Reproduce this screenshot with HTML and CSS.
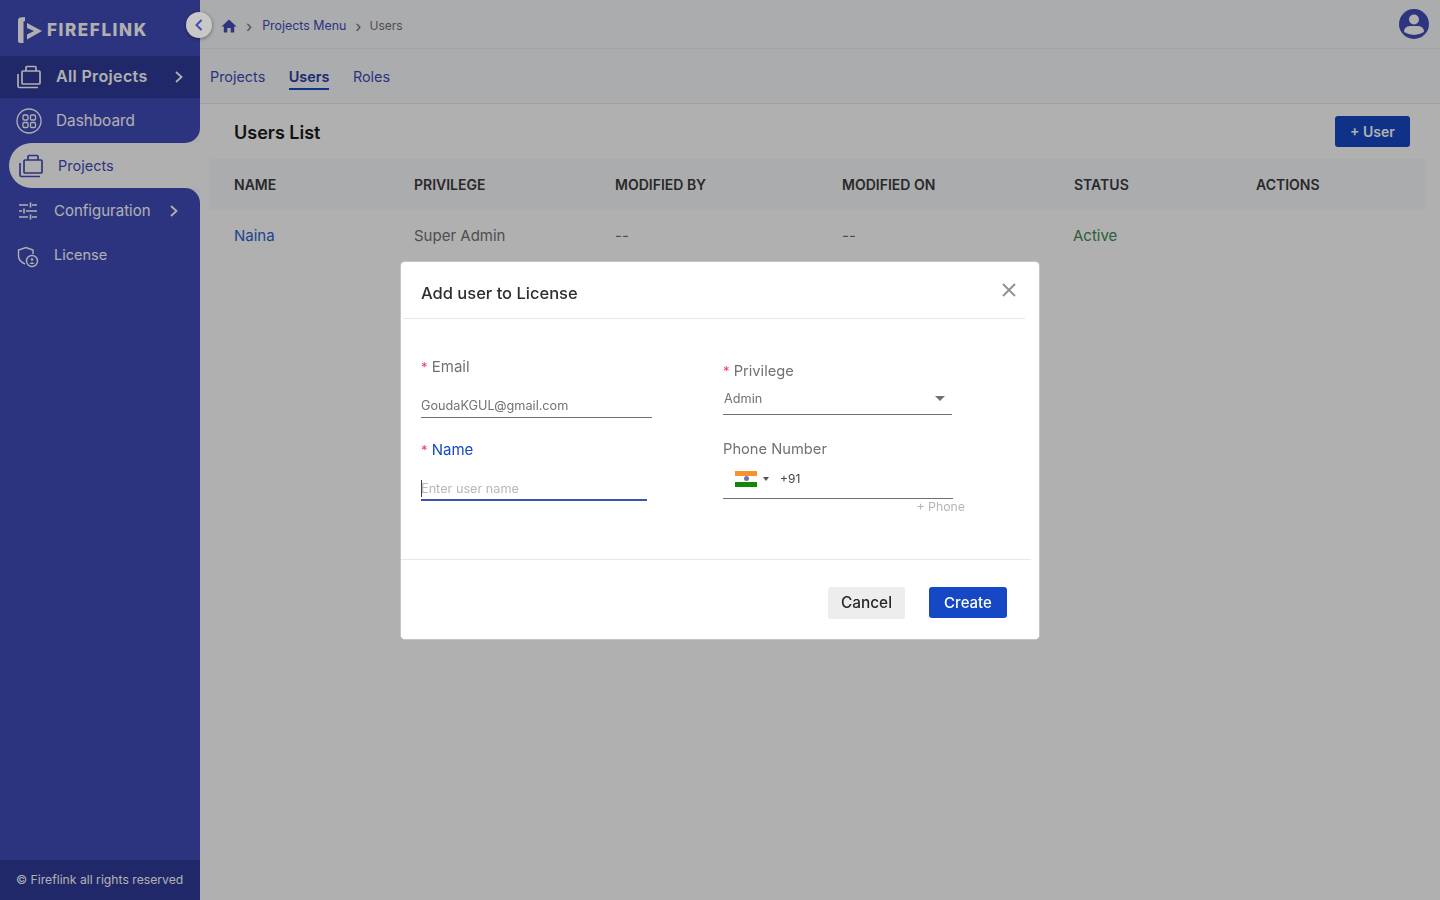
FILE: index.html
```html
<!DOCTYPE html>
<html lang="en">
<head>
    <meta charset="utf-8">
    <title>Users</title>
    <link rel="stylesheet" href="styles.css">
</head>
<body>
    <div class="app">
        <!-- Sidebar -->
        <aside class="sidebar">
            <div class="logo">
                <svg class="logo-mark" width="26" height="28" viewBox="0 0 26 28">
                    <path d="M1 4 Q1 2 3 1.500 L8 1 V5 L6.500 5.500 V27 H3 Q1 27 1 25 Z" fill="#fff"/>
                    <path d="M10 7 L25 15 L10 23.500 V18.500 L17 15 L10 12 Z" fill="#fff"/>
                </svg>
                <span class="logo-text">FIREFLINK</span>
            </div>
            <nav class="menu">
                <a class="menu-item menu-all">
                    <svg class="menu-icon" width="26" height="26" viewBox="0 0 26 26" fill="none" stroke="currentColor" stroke-width="1.700">
                        <rect x="6" y="7" width="18" height="13" rx="1"/>
                        <path d="M10 7 V3.500 Q10 2.500 11 2.500 H19 Q20 2.500 20 3.500 V7"/>
                        <path d="M2 10 V22 Q2 23.500 3.500 23.500 H22"/>
                    </svg>
                    <span class="menu-label">All Projects</span>
                    <svg class="chevron" width="10" height="12" viewBox="0 0 10 12" fill="none" stroke="currentColor" stroke-width="1.800"><path d="M2 1 L7.500 6 L2 11"/></svg>
                </a>
                <a class="menu-item menu-before">
                    <svg class="menu-icon" width="26" height="26" viewBox="0 0 26 26" fill="none" stroke="currentColor" stroke-width="1.300">
                        <circle cx="13" cy="13" r="12"/>
                        <rect x="7" y="7" width="5" height="5" rx="1.200"/>
                        <rect x="14.500" y="7" width="5" height="5" rx="1.200"/>
                        <rect x="7" y="14.500" width="5" height="5" rx="1.200"/>
                        <rect x="14.500" y="14.500" width="5" height="5" rx="1.200"/>
                    </svg>
                    <span class="menu-label">Dashboard</span>
                </a>
                <div class="active-wrap">
                    <a class="menu-item menu-active">
                        <svg class="menu-icon" width="26" height="26" viewBox="0 0 26 26" fill="none" stroke="currentColor" stroke-width="1.700">
                            <rect x="6" y="7" width="18" height="13" rx="1"/>
                            <path d="M10 7 V3.500 Q10 2.500 11 2.500 H19 Q20 2.500 20 3.500 V7"/>
                            <path d="M2 10 V22 Q2 23.500 3.500 23.500 H22"/>
                        </svg>
                        <span class="menu-label">Projects</span>
                    </a>
                </div>
                <a class="menu-item menu-after">
                    <svg class="menu-icon" width="20" height="18" viewBox="0 0 20 18" fill="none" stroke="currentColor" stroke-width="1.600">
                        <path d="M1 3 H10 M14 3 H19 M12.500 0.500 V5.500 M1 9 H4 M8 9 H19 M6 6.500 V11.500 M1 15 H10 M14 15 H19 M12.500 12.500 V17.500"/>
                    </svg>
                    <span class="menu-label">Configuration</span>
                    <svg class="chevron" width="10" height="12" viewBox="0 0 10 12" fill="none" stroke="currentColor" stroke-width="1.800"><path d="M2 1 L7.500 6 L2 11"/></svg>
                </a>
                <a class="menu-item menu-license">
                    <svg class="menu-icon" width="22" height="22" viewBox="0 0 22 22" fill="none" stroke="currentColor" stroke-width="1.400">
                        <path d="M16 8 V4 L9 1.500 L1.500 4 V10 Q1.500 15 8 18"/>
                        <circle cx="15" cy="15" r="5.500"/>
                        <circle cx="15" cy="13.500" r="1.300" fill="currentColor" stroke="none"/>
                        <path d="M12.500 18 Q15 14.500 17.500 18 Z" fill="currentColor" stroke="none"/>
                    </svg>
                    <span class="menu-label">License</span>
                </a>
            </nav>
            <div class="sidebar-footer">© Fireflink all rights reserved</div>
        </aside>

        <!-- Main content -->
        <main class="main">
            <header class="topbar">
                <div class="crumbs">
                    <svg width="16" height="14" viewBox="0 0 16 14"><path d="M8 0.500 L15.500 7.500 H13.200 V13.500 H9.700 V9 H6.300 V13.500 H2.800 V7.500 H0.500 Z" fill="#434db8"/></svg>
                    <span class="crumb-sep">›</span>
                    <span class="crumb-link">Projects Menu</span>
                    <span class="crumb-sep">›</span>
                    <span class="crumb-now">Users</span>
                </div>
                <svg class="avatar" width="30" height="30" viewBox="0 0 30 30">
                    <circle cx="15" cy="15" r="15" fill="#434db8"/>
                    <circle cx="15" cy="10.500" r="5" fill="#fff"/>
                    <path d="M5 23 Q5 17.500 11 17 H19 Q25 17.500 25 23 Q20 26 15 26 Q10 26 5 23 Z" fill="#fff"/>
                </svg>
            </header>

            <div class="tabs">
                <a class="tab">Projects</a>
                <a class="tab tab-active">Users</a>
                <a class="tab">Roles</a>
            </div>

            <section class="card">
                <div class="card-head">
                    <h2>Users List</h2>
                    <button class="add-btn">+ User</button>
                </div>
                <div class="table-row table-head">
                    <span>NAME</span>
                    <span>PRIVILEGE</span>
                    <span>MODIFIED BY</span>
                    <span>MODIFIED ON</span>
                    <span>STATUS</span>
                    <span>ACTIONS</span>
                </div>
                <div class="table-row">
                    <span class="user-name">Naina</span>
                    <span>Super Admin</span>
                    <span>--</span>
                    <span>--</span>
                    <span class="status">Active</span>
                    <span></span>
                </div>
            </section>
        </main>
    </div>

    <div class="overlay"></div>

    <button class="collapse">
        <svg width="8" height="12" viewBox="0 0 8 12" fill="none" stroke="#434db8" stroke-width="2"><path d="M6.500 1 L1.500 6 L6.500 11"/></svg>
    </button>

    <!-- Add user dialog -->
    <div class="modal">
        <div class="modal-head">
            <h3>Add user to License</h3>
            <svg class="modal-close" width="14" height="14" viewBox="0 0 14 14" stroke="#8a8f9a" stroke-width="1.800"><path d="M1 1 L13 13 M13 1 L1 13"/></svg>
        </div>
        <div class="modal-body">
            <div class="col">
                <div class="field field-email">
                    <label><i>*</i> Email</label>
                    <div class="value">GoudaKGUL@gmail.com</div>
                </div>
                <div class="field field-name">
                    <label class="focus"><i>*</i> Name</label>
                    <div class="value placeholder"><b class="caret"></b>Enter user name</div>
                </div>
            </div>
            <div class="col col-right">
                <div class="field field-privilege">
                    <label><i>*</i> Privilege</label>
                    <div class="value select">Admin<b class="arrow"></b></div>
                </div>
                <div class="field field-phone">
                    <label>Phone Number</label>
                    <div class="value phone">
                        <span class="flag"><b class="saffron"></b><b class="white"><em></em></b><b class="green"></b></span>
                        <b class="arrow arrow-small"></b>
                        <span class="dial">+91</span>
                    </div>
                    <div class="hint">+ Phone</div>
                </div>
            </div>
        </div>
        <div class="modal-foot">
            <button class="btn-cancel">Cancel</button>
            <button class="btn-create">Create</button>
        </div>
    </div>
</body>
</html>
```
FILE: styles.css
```css
* {
    margin: 0;
    padding: 0;
    box-sizing: border-box;
    font-family: 'Inter', 'Open Sans', sans-serif;
}

:root {
    --brand: #424cb9;
    --brand-dark: #2f3a99;
    --blue: #1648c6;
    --page: #ffffff;
}

body {
    width: 1440px;
    height: 900px;
    overflow: hidden;
    background: var(--page);
}

.app {
    display: flex;
    height: 900px;
}

/* Sidebar */
.sidebar {
    width: 200px;
    flex-shrink: 0;
    display: flex;
    flex-direction: column;
    background: var(--brand);
    color: #fff;
}

.logo {
    height: 56px;
    display: flex;
    align-items: center;
    padding: 3px 0 0 17px;
    gap: 4px;
}

.logo-text {
    font-size: 17px;
    font-weight: 800;
    letter-spacing: 1.6px;
}

.menu {
    flex: 1;
    background: #f8f9fc;
    display: flex;
    flex-direction: column;
}

.menu-item {
    display: flex;
    align-items: center;
    height: 45px;
    font-size: 15px;
    background: var(--brand);
}

.menu-all {
    height: 42px;
    background: var(--brand-dark);
    padding-left: 16px;
    font-size: 16px;
    font-weight: 600;
    letter-spacing: 0.35px;
}

.menu-all .menu-label { margin: 0 0 2px 14px; }
.menu-all .chevron { margin-left: 26px; }

.menu-before {
    padding-left: 16px;
    border-bottom-right-radius: 15px;
    font-size: 15.3px;
}

.menu-before .menu-label { margin-left: 14px; }

.active-wrap {
    height: 45px;
    padding-left: 9px;
    background: var(--brand);
}

.menu-active {
    padding-left: 9px;
    background: var(--page);
    color: var(--brand);
    border-radius: 24px 0 0 24px;
    font-size: 14.5px;
}

.menu-active .menu-label { margin-left: 14px; }

.menu-after {
    padding-left: 18px;
    border-top-right-radius: 15px;
}

.menu-after .menu-label { margin-left: 16px; }
.menu-after .chevron { margin-left: 18px; }

.menu-license {
    padding: 13px 0 0 17px;
    flex: 1;
    align-items: flex-start;
    font-size: 14.5px;
}

.menu-license .menu-label { margin-left: 15px; }

.sidebar-footer {
    height: 40px;
    display: flex;
    align-items: center;
    padding: 0 0 1px 16px;
    background: var(--brand-dark);
    font-size: 12.2px;
}

/* Main column */
.main {
    flex: 1;
    display: flex;
    flex-direction: column;
    min-width: 0;
}

.topbar {
    height: 49px;
    display: flex;
    align-items: center;
    justify-content: space-between;
    padding: 0 11px 0 21px;
    background: #f8f9fc;
    border-bottom: 1px solid #eceef2;
}

.crumbs {
    display: flex;
    align-items: center;
    font-size: 12.4px;
    padding-top: 3px;
}

.crumb-sep {
    margin: 0 9px;
    color: #727272;
    font-size: 16px;
    line-height: 16px;
}

.crumb-link {
    color: var(--brand);
    margin-left: 1px;
}

.crumb-now {
    color: #727272;
    font-size: 12px;
    margin-left: -1px;
}

.tabs {
    height: 55px;
    display: flex;
    align-items: center;
    gap: 23.5px;
    padding-left: 10px;
    background: #f8f9fc;
    border-bottom: 1px solid #e8e8ec;
}

.tab {
    font-size: 14.4px;
    color: var(--brand);
    padding: 5px 0 3px;
    border-bottom: 2px solid transparent;
}

.tab-active {
    font-weight: 600;
    color: #2b3ba8;
    border-bottom-color: var(--blue);
}

.card {
    width: 1216px;
    margin-left: 10px;
    flex: 1;
    background: var(--page);
}

.card-head {
    height: 55px;
    display: flex;
    align-items: center;
    justify-content: space-between;
    padding: 0 16px 0 24px;
}

.card-head h2 {
    font-size: 18px;
    font-weight: 600;
    color: #1a1a1a;
    margin-top: 1px;
}

.add-btn {
    width: 75px;
    height: 31px;
    background: var(--blue);
    border: none;
    border-radius: 3px;
    color: #fff;
    font-size: 14px;
    font-weight: 600;
}

.table-row {
    display: grid;
    grid-template-columns: 180px 201px 227px 232px 182px 1fr;
    align-items: center;
    height: 50px;
    padding-left: 24px;
    font-size: 15px;
    color: #727272;
}

.table-head {
    height: 51px;
    background: #f8f9fd;
    color: #3c3c3c;
    font-size: 14px;
    font-weight: 600;
}

.user-name { color: #2c62d2; }

.status {
    color: #3d8a50;
    margin-left: -1px;
}

/* Dim layer */
.overlay {
    position: fixed;
    inset: 0;
    background: rgba(0, 0, 0, 0.31);
}

.collapse {
    position: fixed;
    left: 186px;
    top: 12px;
    width: 26px;
    height: 26px;
    border: none;
    border-radius: 50%;
    background: #c8c8c6;
    box-shadow: 0 1px 4px rgba(0, 0, 0, 0.4);
    display: flex;
    align-items: center;
    justify-content: center;
}

/* Dialog */
.modal {
    position: fixed;
    left: 401px;
    top: 262px;
    width: 638px;
    height: 377px;
    background: #fff;
    border-radius: 4px;
    box-shadow: 0 0 0 1px #c4c4c4;
    display: flex;
    flex-direction: column;
}

.modal-head {
    height: 57px;
    margin: 0 14px 0 2px;
    padding: 12px 0 0 18px;
    border-bottom: 1px solid #e8e8e8;
    position: relative;
}

.modal-head h3 {
    font-size: 16.5px;
    font-weight: 450;
    color: #2f2f2f;
    line-height: 38px;
}

.modal-close {
    position: absolute;
    right: 9px;
    top: 21px;
}

.modal-body {
    flex: 1;
    display: grid;
    grid-template-columns: 302px 1fr;
    padding-left: 20px;
}

.field label {
    display: block;
    font-size: 15px;
    line-height: 20px;
    color: #727272;
}

.col-right .field label { font-size: 14.7px; }

.field label i {
    color: #ea3d6b;
    font-style: normal;
    font-size: 13px;
}

.field label.focus { color: var(--blue); }

.value {
    border-bottom: 1px solid #707070;
    font-size: 12.7px;
    color: #727272;
    display: flex;
    align-items: center;
}

.field-email { padding-top: 38px; }
.field-email .value { width: 231px; height: 31px; margin-top: 10px; padding-top: 6px; }

.field-name { padding-top: 22px; }
.field-name .value { width: 226px; height: 31px; margin-top: 10px; padding-top: 8px; border-bottom: 2px solid #3f51b5; }

.placeholder { color: #b8b8b8; }

.caret {
    width: 1px;
    height: 17px;
    background: #444;
    margin-right: -1px;
}

.field-privilege { padding-top: 42px; }
.field-privilege .value { width: 229px; height: 34px; padding: 2px 7px 0 1px; justify-content: space-between; }

.arrow {
    width: 0;
    height: 0;
    border-left: 5px solid transparent;
    border-right: 5px solid transparent;
    border-top: 5px solid #707070;
}

.arrow-small {
    border-left-width: 3px;
    border-right-width: 3px;
    border-top: 4px solid #555;
    margin-left: 6px;
}

.field-phone { padding-top: 24px; }

.phone {
    width: 230px;
    height: 40px;
    padding: 0 0 0 12px;
}

.flag {
    width: 22px;
    height: 16px;
    margin-top: 1px;
    display: flex;
    flex-direction: column;
}

.flag b { display: block; flex: 1; }
.saffron { background: #f7922d; }
.white { background: #fff; position: relative; }
.green { background: #128807; }

.white em {
    position: absolute;
    left: 8.500px;
    top: 0;
    width: 5px;
    height: 5px;
    border-radius: 50%;
    background: #6d74b6;
}

.dial {
    margin-left: 11px;
    color: #444;
    font-size: 12px;
}

.hint {
    width: 242px;
    text-align: right;
    font-size: 12.3px;
    color: #b5b5b5;
    line-height: 16px;
}

.modal-foot {
    height: 80px;
    margin-right: 8px;
    border-top: 1px solid #e8e8e8;
    display: flex;
    justify-content: flex-end;
    gap: 24px;
    padding: 27px 24px 0 0;
}

.modal-foot button {
    border: none;
    border-radius: 3px;
    font-size: 15px;
    font-weight: 500;
    height: 32px;
}

.modal-foot .btn-cancel {
    width: 77px;
    background: #ededed;
    color: #282828;
    padding-bottom: 2px;
    font-size: 15.4px;
}

.modal-foot .btn-create {
    width: 78px;
    height: 31px;
    background: var(--blue);
    color: #fff;
}
```
